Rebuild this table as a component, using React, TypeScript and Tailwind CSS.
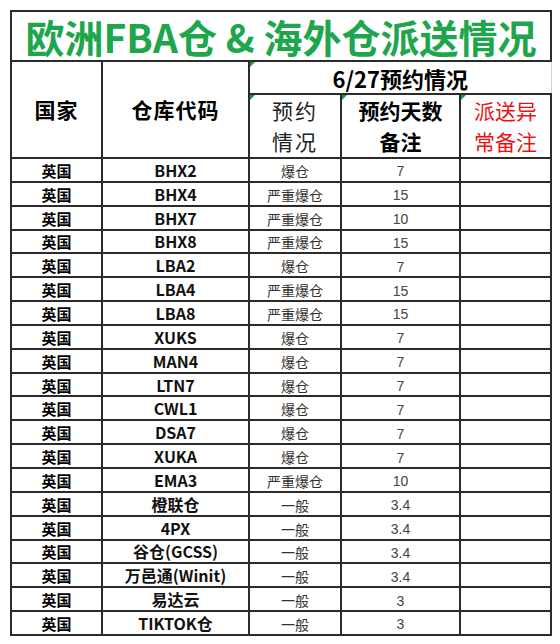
import React from "react";

type Row = { code: string; status: string; days: string };

const ROWS: Row[] = [
  { code: "BHX2", status: "爆仓", days: "7" },
  { code: "BHX4", status: "严重爆仓", days: "15" },
  { code: "BHX7", status: "严重爆仓", days: "10" },
  { code: "BHX8", status: "严重爆仓", days: "15" },
  { code: "LBA2", status: "爆仓", days: "7" },
  { code: "LBA4", status: "严重爆仓", days: "15" },
  { code: "LBA8", status: "严重爆仓", days: "15" },
  { code: "XUKS", status: "爆仓", days: "7" },
  { code: "MAN4", status: "爆仓", days: "7" },
  { code: "LTN7", status: "爆仓", days: "7" },
  { code: "CWL1", status: "爆仓", days: "7" },
  { code: "DSA7", status: "爆仓", days: "7" },
  { code: "XUKA", status: "爆仓", days: "7" },
  { code: "EMA3", status: "严重爆仓", days: "10" },
  { code: "橙联仓", status: "一般", days: "3.4" },
  { code: "4PX", status: "一般", days: "3.4" },
  { code: "谷仓(GCSS)", status: "一般", days: "3.4" },
  { code: "万邑通(Winit)", status: "一般", days: "3.4" },
  { code: "易达云", status: "一般", days: "3" },
  { code: "TIKTOK仓", status: "一般", days: "3" },
];

// little green comment marker in the top-left of a cell
function Marker() {
  return (
    <span className="absolute left-0 top-0 h-0 w-0 border-t-[5px] border-r-[5px] border-t-[#1f9a3c] border-r-transparent" />
  );
}

const cell = "border-2 border-[#2b2b2b] p-0 text-center align-middle leading-none";

export default function App() {
  return (
    <div className="min-h-[644px] w-[560px] bg-white pl-[10px] pt-[10px] font-['Noto_Sans_CJK_SC',sans-serif] leading-none text-black">
      <table className="w-[540px] table-fixed border-collapse">
        <colgroup>
          <col className="w-[91px]" />
          <col className="w-[147px]" />
          <col className="w-[92px]" />
          <col className="w-[119px]" />
          <col className="w-[91px]" />
        </colgroup>
        <tbody>
          <tr className="h-[50px]">
            <td colSpan={5} className={cell}>
              <div className="whitespace-nowrap text-[39px] font-bold leading-none text-[#1ea64d]">
                欧洲FBA仓 &amp; 海外仓派送情况
              </div>
            </td>
          </tr>
          <tr className="h-[33px]">
            <td rowSpan={2} className={cell}>
              <span className="text-[21px] font-bold tracking-[1px]">国家</span>
            </td>
            <td rowSpan={2} className={cell}>
              <span className="text-[21px] font-bold tracking-[1px]">仓库代码</span>
            </td>
            <td
              colSpan={3}
              className="relative border-2 border-r border-[#2b2b2b] border-r-[#d4d4d4] p-0 text-center align-middle leading-none"
            >
              <Marker />
              <span className="text-[22px] font-bold leading-none">6/27预约情况</span>
            </td>
          </tr>
          <tr className="h-[63px]">
            <td className={`${cell} relative`}>
              <Marker />
              <div className="text-[21px] leading-[31px] tracking-[2px] text-[#222]">
                预约
                <br />
                情况
              </div>
            </td>
            <td className={`${cell} relative`}>
              <Marker />
              <div className="text-[21px] font-bold leading-[31px]">
                预约天数
                <br />
                备注
              </div>
            </td>
            <td className={`${cell} relative`}>
              <Marker />
              <div className="text-[21px] leading-[31px] text-[#ee1111]">
                派送异
                <br />
                常备注
              </div>
            </td>
          </tr>
          {ROWS.map((row) => (
            <tr key={row.code} className="h-[23.85px]">
              <td className={cell}>
                <span className="text-[15px] font-bold leading-none">英国</span>
              </td>
              <td className={cell}>
                <span className="text-[16px] font-bold leading-none text-[#111]">{row.code}</span>
              </td>
              <td className={cell}>
                <span className="text-[14px] leading-none text-[#333]">{row.status}</span>
              </td>
              <td className={cell}>
                <span className="font-['Liberation_Sans',sans-serif] text-[14px] leading-none text-[#444]">
                  {row.days}
                </span>
              </td>
              <td className={cell} />
            </tr>
          ))}
        </tbody>
      </table>
    </div>
  );
}
